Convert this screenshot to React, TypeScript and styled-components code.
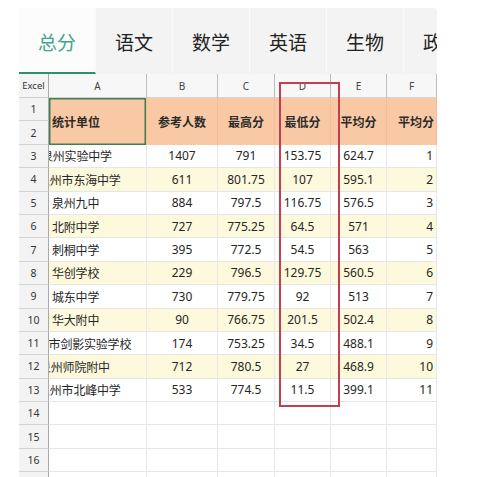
import React from "react";
import styled, { createGlobalStyle } from "styled-components";

const Global = createGlobalStyle`
  html, body { margin: 0; padding: 0; background: #ffffff; }
  body { font-family: "Noto Sans", "Noto Sans CJK SC", sans-serif; }
`;

const Page = styled.div`
  position: relative;
  width: 500px;
  height: 477px;
  overflow: hidden;
  padding: 8px 0 0 19px;
  box-sizing: border-box;
  background: #fff;
`;

const TabBar = styled.div`
  display: flex;
  width: 418px;
  height: 66px;
  overflow: hidden;
  background: #f3f3f3;
  border-top-left-radius: 4px;
  border-top-right-radius: 4px;
`;

const Tab = styled.div<{ $active?: boolean }>`
  flex: 0 0 77px;
  box-sizing: border-box;
  display: flex;
  align-items: center;
  justify-content: center;
  font-family: "Noto Sans CJK SC", "Noto Sans", sans-serif;
  font-size: 19px;
  color: ${(p) => (p.$active ? "#3ea68b" : "#222")};
  background: ${(p) => (p.$active ? "#fcfcfc" : "#f3f3f3")};
  border-right: 1px solid #fafafa;
  border-bottom: 2px solid ${(p) => (p.$active ? "#2f8e72" : "#f3f3f3")};
  padding-top: 2px;
  white-space: nowrap;
`;

const Sheet = styled.div`
  display: grid;
  width: 418px;
  grid-template-columns: 30px 98px 71px 57px 56px 56px 50px;
  grid-template-rows: 24px repeat(17, 23.4px);
  height: 403px;
  overflow: hidden;
  font-family: "Noto Sans", "Noto Sans CJK SC", sans-serif;
`;

const Corner = styled.div`
  display: flex;
  align-items: center;
  justify-content: center;
  background: #f4f4f4;
  border-right: 1px solid #a9a9a9;
  border-bottom: 1px solid #cfcfcf;
  font-size: 9.5px;
  color: #333;
  box-sizing: border-box;
`;

const ColHead = styled.div`
  display: flex;
  align-items: center;
  justify-content: center;
  background: #f7f7f7;
  border-right: 1px solid #bdbdbd;
  border-bottom: 1px solid #d4d4d4;
  font-size: 10px;
  color: #444;
  box-sizing: border-box;
`;

const RowHead = styled.div`
  display: flex;
  align-items: center;
  justify-content: center;
  background: #f3f3f3;
  border-right: 1px solid #a9a9a9;
  border-bottom: 1px solid #d2d2d2;
  font-size: 10.5px;
  color: #333;
  box-sizing: border-box;
`;

const HeadCell = styled.div<{ $align?: string; $selected?: boolean }>`
  grid-row: span 2;
  display: flex;
  align-items: center;
  justify-content: ${(p) => p.$align || "center"};
  padding: ${(p) => (p.$align === "flex-start" ? "0 0 0 3px" : p.$align === "flex-end" ? "0 2px 0 0" : "0")};
  background: #f8c9a4;
  border-right: 1px solid #f3bd95;
  font-family: "Noto Sans CJK SC", "Noto Sans", sans-serif;
  font-weight: 700;
  font-size: 12px;
  color: #2b2b2b;
  box-sizing: border-box;
  white-space: nowrap;
  overflow: hidden;
  box-shadow: ${(p) => (p.$selected ? "inset 0 0 0 1.5px #3f7f52" : "none")};
`;

const Cell = styled.div<{ $alt?: boolean; $align?: string }>`
  display: flex;
  align-items: center;
  justify-content: ${(p) => p.$align || "center"};
  padding-right: ${(p) => (p.$align === "flex-end" ? "3px" : "0")};
  background: ${(p) => (p.$alt ? "#fdf9dc" : "#ffffff")};
  border-right: 1px solid #e8e8e8;
  border-bottom: 1px solid #e6e6e6;
  font-size: 12px;
  color: #262626;
  box-sizing: border-box;
  white-space: nowrap;
  overflow: hidden;
`;

const NameCell = styled(Cell)`
  justify-content: flex-start;
  font-family: "Noto Sans CJK SC", "Noto Sans", sans-serif;
  font-size: 12px;
`;

const NameText = styled.span<{ $shift: number }>`
  margin-left: ${(p) => p.$shift}px;
  letter-spacing: -0.2px;
`;

const Highlight = styled.div`
  position: absolute;
  left: 279px;
  top: 82px;
  width: 61px;
  height: 325px;
  border: 2px solid #c23e50;
  box-sizing: border-box;
  pointer-events: none;
`;

const tabs = ["总分", "语文", "数学", "英语", "生物", "政治"];
const letters = ["A", "B", "C", "D", "E", "F"];

type Row = { name: string; shift: number; b: string; c: string; d: string; e: string; f: string };

const rows: Row[] = [
  { name: "泉州实验中学", shift: -8, b: "1407", c: "791", d: "153.75", e: "624.7", f: "1" },
  { name: "泉州市东海中学", shift: -11, b: "611", c: "801.75", d: "107", e: "595.1", f: "2" },
  { name: "泉州九中", shift: 3, b: "884", c: "797.5", d: "116.75", e: "576.5", f: "3" },
  { name: "北附中学", shift: 3, b: "727", c: "775.25", d: "64.5", e: "571", f: "4" },
  { name: "刺桐中学", shift: 3, b: "395", c: "772.5", d: "54.5", e: "563", f: "5" },
  { name: "华创学校", shift: 3, b: "229", c: "796.5", d: "129.75", e: "560.5", f: "6" },
  { name: "城东中学", shift: 3, b: "730", c: "779.75", d: "92", e: "513", f: "7" },
  { name: "华大附中", shift: 3, b: "90", c: "766.75", d: "201.5", e: "502.4", f: "8" },
  { name: "泉州市剑影实验学校", shift: -24, b: "174", c: "753.25", d: "34.5", e: "488.1", f: "9" },
  { name: "泉州师院附中", shift: -10, b: "712", c: "780.5", d: "27", e: "468.9", f: "10" },
  { name: "泉州市北峰中学", shift: -11, b: "533", c: "774.5", d: "11.5", e: "399.1", f: "11" },
];

export default function App() {
  return (
    <Page>
      <Global />
      <TabBar>
        {tabs.map((t, i) => (
          <Tab key={t} $active={i === 0}>
            {t}
          </Tab>
        ))}
      </TabBar>
      <Sheet>
        <Corner>Excel</Corner>
        {letters.map((l) => (
          <ColHead key={l}>{l}</ColHead>
        ))}
        <RowHead>1</RowHead>
        <HeadCell $align="flex-start" $selected>统计单位</HeadCell>
        <HeadCell>参考人数</HeadCell>
        <HeadCell>最高分</HeadCell>
        <HeadCell>最低分</HeadCell>
        <HeadCell>平均分</HeadCell>
        <HeadCell $align="flex-end">平均分</HeadCell>
        <RowHead>2</RowHead>
        {rows.map((r, i) => {
          const alt = i % 2 === 1;
          return (
            <React.Fragment key={i}>
              <RowHead>{i + 3}</RowHead>
              <NameCell $alt={alt}>
                <NameText $shift={r.shift}>{r.name}</NameText>
              </NameCell>
              <Cell $alt={alt}>{r.b}</Cell>
              <Cell $alt={alt}>{r.c}</Cell>
              <Cell $alt={alt}>{r.d}</Cell>
              <Cell $alt={alt}>{r.e}</Cell>
              <Cell $alt={alt} $align="flex-end">{r.f}</Cell>
            </React.Fragment>
          );
        })}
        {[14, 15, 16, 17].map((n) => (
          <React.Fragment key={n}>
            <RowHead>{n}</RowHead>
            {letters.map((l) => (
              <Cell key={l} />
            ))}
          </React.Fragment>
        ))}
      </Sheet>
      <Highlight />
    </Page>
  );
}
